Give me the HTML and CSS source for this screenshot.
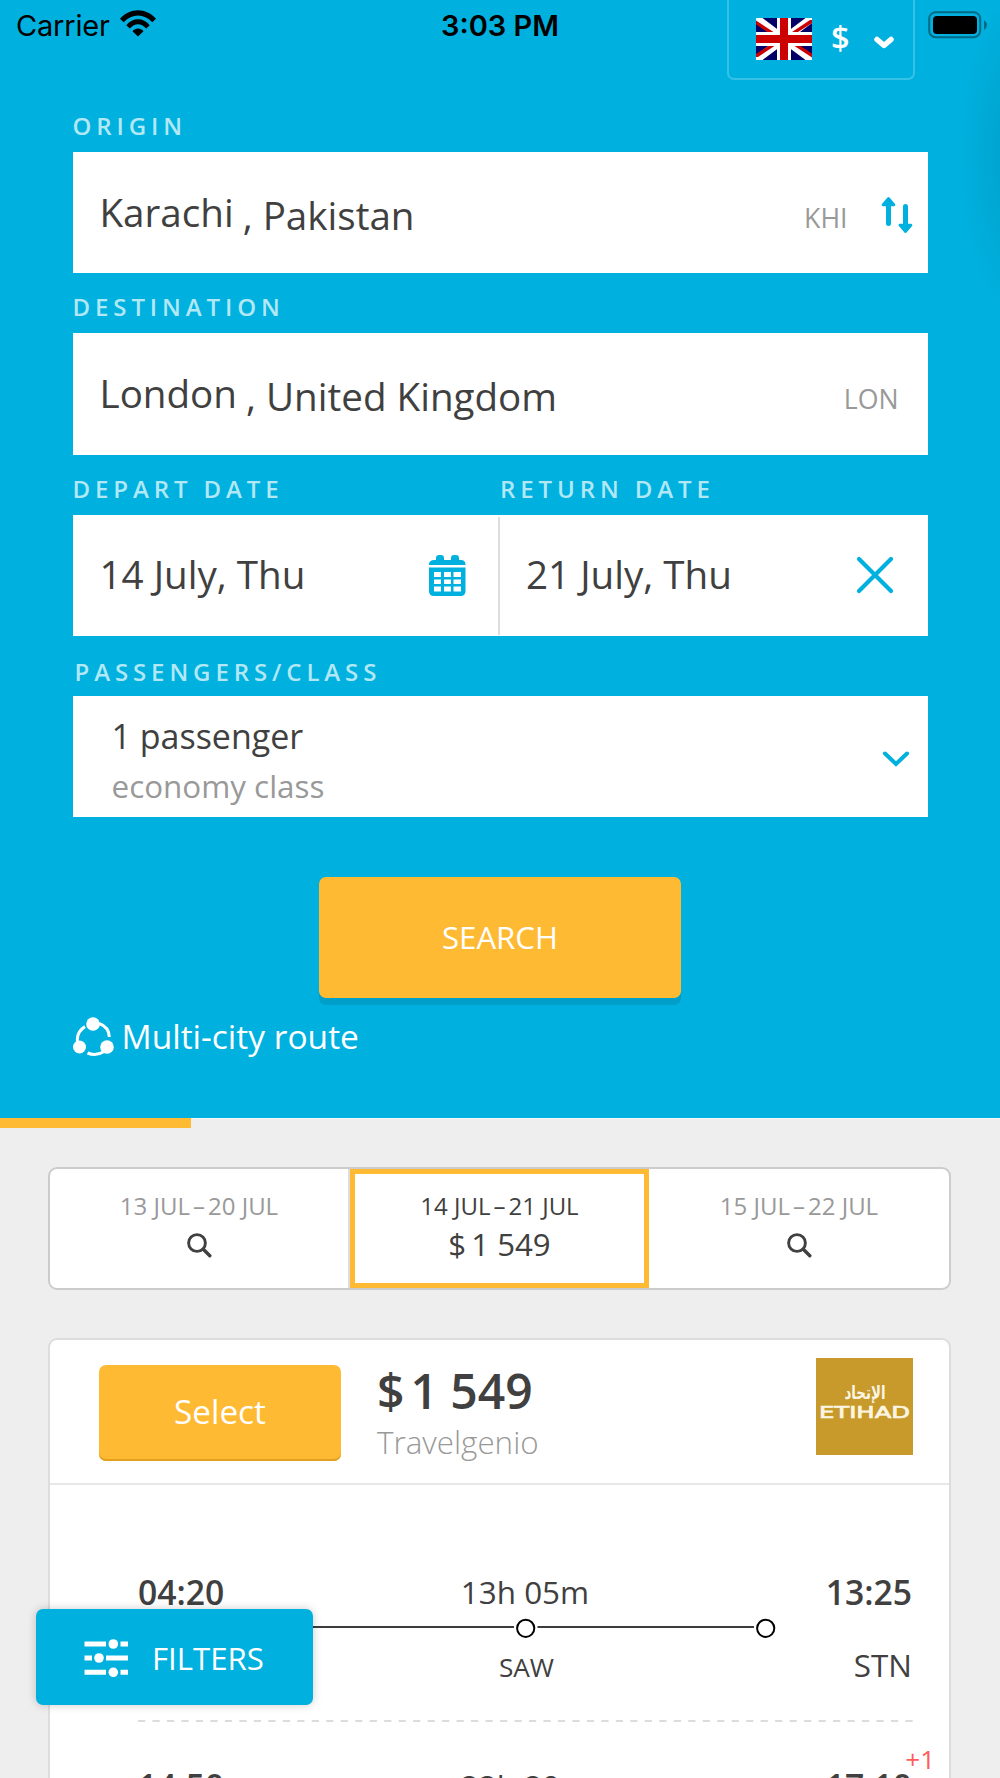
FILE: index.html
```html
<!DOCTYPE html>
<html lang="en">
<head>
<meta charset="utf-8">
<title>Flight search</title>
<link rel="stylesheet" href="styles.css">
</head>
<body>
<div class="screen">
  <header class="hero">
    <div class="status">
      <span class="carrier">Carrier</span>
      <svg class="wifi" width="38" height="29" viewBox="0 0 38 29"><path d="M1 9.800C11-1.600 27-1.600 37 9.800L33.300 13.200C25 4.400 13 4.400 4.700 13.200ZM7.300 16.200C13.800 8.400 24.200 8.400 30.700 16.200L27.200 19.500C22 13.800 16 13.800 10.800 19.500ZM13.500 22.300C16.400 18.600 21.600 18.600 24.500 22.300L19 27.500Z" fill="#000"/></svg>
      <span class="time">3:03 PM</span>
      <div class="locale">
        <svg class="flag" width="56" height="42" viewBox="0 0 56 42"><path d="M0 2q0-2 2-2h52q2 0 2 2v38q0 2-2 2H2q-2 0-2-2z" fill="#006"/><path d="M0 3L52 42H56V39L4 0H0ZM56 3L4 42H0V39L52 0H56Z" fill="#fff" stroke="#fff" stroke-width="3"/><path d="M0 2.500L19 15H13L0 6.500ZM56 39.500L37 27H43L56 35.500ZM56 2V5L42 14H36L54 2ZM0 39V36L14 27H20L2 39Z" fill="#c00"/><path d="M21 0h14v42H21zM0 14h56v14H0z" fill="#fff"/><path d="M24 0h8v42h-8zM0 17h56v8H0z" fill="#c00"/></svg>
        <span class="currency">$</span>
        <svg class="caret" width="20" height="13" viewBox="0 0 20 13"><path d="M3 3.500L10 9.500L17 3.500" fill="none" stroke="#fff" stroke-width="5.500" stroke-linecap="round" stroke-linejoin="round"/></svg>
      </div>
      <svg class="battery" width="60" height="28" viewBox="0 0 60 28"><rect x="1.200" y="1.200" width="51" height="25" rx="6.500" fill="none" stroke="#006a85" stroke-width="2"/><rect x="5" y="5" width="44" height="18" rx="4" fill="#000"/><path d="M56 9q6 5 0 10z" fill="#006a85"/></svg>
    </div>

    <form class="search">
      <label class="label">ORIGIN</label>
      <div class="field">
        <span class="city">Karachi</span><span class="country">, Pakistan</span>
        <span class="code">KHI</span>
        <svg class="swap" width="32" height="38" viewBox="0 0 32 38"><g fill="#00b1df" stroke="#00b1df" stroke-linecap="round" stroke-linejoin="round"><path d="M7.500 8V27.500M24.500 10.500V29" stroke-width="5"/><path d="M2 8.800L7.500 2.500L13 8.800ZM19 29.200L24.500 35.500L30 29.200Z" stroke-width="2.800"/></g></svg>
      </div>

      <label class="label">DESTINATION</label>
      <div class="field">
        <span class="city">London</span><span class="country">, United Kingdom</span>
        <span class="code last">LON</span>
      </div>

      <div class="labels"><label class="label">DEPART DATE</label><label class="label">RETURN DATE</label></div>
      <div class="dates">
        <div class="field depart">
          <span class="date">14 July, Thu</span>
          <svg class="calendar" width="37" height="42" viewBox="0 0 37 42"><path d="M0 9V8.500Q1 5 5 5H7V3Q7 0 10 0H12Q15 0 15 3V5H22V3Q22 0 25 0H27Q30 0 30 3V5H32Q36 5 36.500 9V10H0ZM0 12.500H36.500V36Q36.500 41 31.500 41H5Q0 41 0 36Z" fill="#00b1df"/><path d="M5 17h7v5H5zM15 17h7v5h-7zM24.500 17h7.500v5h-7.500zM5 24.500h7v4.500H5zM15 24.500h7v4.500h-7zM24.500 24.500h7.500v4.500h-7.500zM5 31.500h7v5H5zM15 31.500h7v5h-7zM24.500 31.500h7.500v5h-7.500z" fill="#fff"/></svg>
        </div>
        <div class="field return">
          <span class="date">21 July, Thu</span>
          <svg class="clear" width="38" height="38" viewBox="0 0 38 38"><path d="M3 3L35 35M35 3L3 35" stroke="#00b1df" stroke-width="4.200" stroke-linecap="round"/></svg>
        </div>
      </div>

      <label class="label inset">PASSENGERS/CLASS</label>
      <div class="field passengers">
        <div class="party"><span class="count">1 passenger</span><span class="cabin">economy class</span></div>
        <svg class="expand" width="28" height="18" viewBox="0 0 28 18"><path d="M3 3.500L14 14L25 3.500" fill="none" stroke="#00b1df" stroke-width="4" stroke-linecap="round"/></svg>
      </div>

      <button class="submit" type="button">SEARCH</button>

      <a class="multi">
        <svg width="42" height="40" viewBox="0 0 42 40"><g fill="none" stroke="#fff" stroke-width="3"><path d="M4.500 25C3.500 18 6.500 13 12 9.600M26 6.500C32 8.500 36 13.500 36.300 20M14.500 36C20 38.300 26 37.800 31 34.500"/></g><g fill="#fff"><circle cx="20" cy="7" r="6.800"/><circle cx="6.500" cy="30" r="6.500"/><circle cx="34" cy="30" r="6.800"/></g></svg>
        <span>Multi-city route</span>
      </a>
    </form>
  </header>

  <div class="progress"><div class="bar"></div></div>

  <main class="results">
    <nav class="days">
      <div class="day"><span class="range">13 JUL<i>–</i>20 JUL</span><svg width="25" height="25" viewBox="0 0 25 25"><path d="M16.300 16.300L22.800 22.800" stroke="#404040" stroke-width="3.400" stroke-linecap="round"/><circle cx="10" cy="10" r="8.400" fill="none" stroke="#404040" stroke-width="2.900"/></svg></div>
      <div class="day active"><span class="range">14 JUL<i>–</i>21 JUL</span><span class="fare">$<b></b>1 549</span></div>
      <div class="day"><span class="range">15 JUL<i>–</i>22 JUL</span><svg width="25" height="25" viewBox="0 0 25 25"><path d="M16.300 16.300L22.800 22.800" stroke="#404040" stroke-width="3.400" stroke-linecap="round"/><circle cx="10" cy="10" r="8.400" fill="none" stroke="#404040" stroke-width="2.900"/></svg></div>
    </nav>

    <article class="ticket">
      <div class="offer">
        <button class="select" type="button">Select</button>
        <div class="price"><span class="amount">$<b></b>1 549</span><span class="agency">Travelgenio</span></div>
        <svg class="airline" width="97" height="97" viewBox="0 0 97 97"><rect width="97" height="97" fill="#c79a2b"/><text x="49" y="41" text-anchor="middle" textLength="41" lengthAdjust="spacingAndGlyphs" class="arabic">الإتحاد</text><text x="3" y="59.500" textLength="91" lengthAdjust="spacingAndGlyphs" class="brand">ETIHAD</text></svg>
      </div>

      <div class="leg">
        <div class="times"><span class="clock">04:20</span><span class="duration">13h 05m</span><span class="clock end">13:25</span></div>
        <svg class="track" width="775" height="22" viewBox="0 0 775 22"><path d="M36 9H376M399.500 9H616" stroke="#3c3c3c" stroke-width="2"/><g fill="#fff" stroke="#000" stroke-width="2"><circle cx="387.700" cy="10.300" r="8.600"/><circle cx="627.700" cy="10.300" r="8.600"/></g></svg>
        <div class="stops"><span></span><span class="stop">SAW</span><span class="airport">STN</span></div>
      </div>
      <svg class="divider" width="775" height="2" viewBox="0 0 775 2"><path d="M0 1H775" stroke="#dcdcdc" stroke-width="2" stroke-dasharray="7.200 7.280"/></svg>
      <div class="leg second">
        <div class="times"><span class="clock">14:50</span><span class="duration">22h 20m</span><span class="clock end">17:10<sup class="plus">+1</sup></span></div>
      </div>
    </article>
  </main>

  <button class="filters" type="button">
    <svg width="44" height="38" viewBox="0 0 44 38"><g stroke="#fff" stroke-width="5"><path d="M.500 5H22M36.500 5H44M.500 19H8M22 19H44M.500 33.300H22M36.500 33.300H44"/></g><g fill="#fff"><circle cx="29.300" cy="5" r="4.800"/><circle cx="15" cy="19" r="4.800"/><circle cx="29.300" cy="33.300" r="4.800"/></g></svg>
    <span>FILTERS</span>
  </button>
</div>
</body>
</html>
```
FILE: styles.css
```css
* { box-sizing: border-box; }
body { margin: 0; background: #eee; }
svg { display: block; flex: none; }
button { border: 0; padding: 0; font: inherit; }
.screen {
  position: relative;
  width: 1000px;
  height: 1778px;
  overflow: hidden;
  font-family: "Open Sans", sans-serif;
  color: #404040;
  white-space: nowrap;
}

/* Search header */
.hero {
  height: 1118px;
  background: radial-gradient(ellipse 58px 170px at 1014px 155px, rgba(0, 0, 0, .09), rgba(0, 0, 0, 0)) #00b1df;
}
.status {
  display: flex;
  align-items: flex-start;
  height: 92px;
  padding-left: 16px;
  font-family: Inter, sans-serif;
  font-size: 29px;
  line-height: 52px;
  color: #000;
}
.carrier { width: 103px; letter-spacing: -.2px; }
.wifi { margin-top: 9px; }
.time { width: 118px; margin-left: 284px; font-weight: 600; }
.locale {
  display: flex;
  width: 188px;
  height: 80px;
  margin-left: 168px;
  border: 2px solid #36c1e6;
  border-top: 0;
  border-radius: 0 0 7px 7px;
}
.flag { margin: 18px 0 0 27px; }
.currency {
  width: 18px;
  margin: 12px 0 0 19px;
  font: 600 32.500px/52px "Open Sans", sans-serif;
  color: #fff;
}
.caret { margin: 36px 0 0 25px; }
.battery { margin: 11px 0 0 13px; }

.search {
  display: flex;
  flex-direction: column;
  width: 855px;
  margin: 0 auto;
}
.label {
  height: 60px;
  padding: 18px 0 0;
  font-size: 24px;
  font-weight: 600;
  line-height: 32px;
  letter-spacing: 4.9px;
  color: #b2e8f5;
}
.inset { padding: 20px 0 0 2px; }
.field {
  display: flex;
  height: 121.330px;
  background: #fff;
  font-size: 38.600px;
}
.city { margin-left: 27px; line-height: 121px; }
.country { margin-left: 9px; line-height: 126px; }
.code { margin-left: auto; font-size: 26.670px; line-height: 131px; color: #999; }
.swap { margin: 44px 15px 0 33px; }
.last { margin-right: 29px; }
.labels, .dates { display: grid; grid-template-columns: 1fr 1fr; }
.date { margin-left: 27px; line-height: 119px; }
.depart { background: linear-gradient(#ddd, #ddd) 425px 2px / 2px 118px no-repeat #fff; }
.return .date { margin-left: 26px; }
.calendar { margin: 40px 34px 0 auto; }
.clear { margin: 41px 34px 0 auto; }
.passengers { align-items: flex-start; }
.party { display: flex; flex-direction: column; margin: 15px 0 0 39px; }
.count { font-size: 34px; line-height: 50px; }
.cabin { font-size: 31.400px; line-height: 49px; color: #999; }
.expand { margin: 54px 18px 0 auto; }
.submit {
  align-self: center;
  width: 362px;
  height: 121px;
  margin-top: 60px;
  padding-bottom: 2px;
  border-radius: 7px;
  background: #ffba33;
  box-shadow: 0 7px 0 #009fc9;
  font-size: 31.200px;
  color: #fff;
}
.multi {
  display: flex;
  gap: 7px;
  margin-top: 19px;
  color: #fff;
  font-size: 33.500px;
  line-height: 39px;
}

.progress { height: 10px; border-top: 1px solid #f4f8f9; }
.bar { width: 191px; height: 10px; margin-top: -1px; background: #ffba33; }

/* Date tabs */
.results { padding: 39px 49px 0 48px; }
.days {
  display: grid;
  grid-template-columns: 300px 299px 300px;
  height: 123px;
  border: 2px solid #ccc;
  border-radius: 9px;
  background: #fff;
}
.day {
  display: flex;
  flex-direction: column;
  align-items: center;
  padding-top: 19px;
}
.day:first-child { border-right: 2px solid #ddd; }
.active { padding-top: 14px; border: 5px solid #ffba33; }
.range { font-size: 24px; line-height: 36px; color: #999; }
.range i { margin: 0 3px; font-style: normal; }
.day svg { margin-top: 9px; }
.active .range, .fare { color: #404040; }
.fare { font-size: 31.200px; line-height: 41px; }
.fare b, .amount b { display: inline-block; width: 6px; }
.fare b { width: 5px; }

/* Ticket */
.ticket {
  height: 600px;
  margin-top: 48px;
  border: 2px solid #ddd;
  border-radius: 9px;
  background: #fff;
}
.offer {
  display: flex;
  height: 145px;
  padding: 25px 36px 0 49px;
  border-bottom: 2px solid #e8e8e8;
}
.select {
  width: 242px;
  height: 96px;
  padding-bottom: 5px;
  border-radius: 7px;
  background: #ffba33;
  box-shadow: inset 0 -2px #e39f20;
  font-size: 33.300px;
  color: #fff;
}
.price { display: flex; flex-direction: column; margin: -5px auto 0 36px; }
.amount { font-size: 48px; font-weight: 600; line-height: 62px; }
.agency { font-size: 31.400px; font-weight: 300; line-height: 40px; color: #999; }
.airline { margin-top: -7px; }
.arabic { font: 700 19px "DejaVu Sans", sans-serif; fill: #fcf5e2; }
.brand { font: 400 16px "DejaVu Sans", sans-serif; fill: #fcf5e2; stroke: #fcf5e2; stroke-width: .7px; }
.leg { padding: 86px 37px 0 88px; }
.times, .stops {
  display: grid;
  grid-template-columns: 1fr 2fr 1fr;
  font-size: 31.400px;
  line-height: 44px;
}
.times { line-height: 42px; }
.clock { font-size: 33.700px; font-weight: 600; }
.duration, .stop { text-align: center; }
.end, .airport { text-align: right; }
.track { margin-top: 5px; }
.stops { margin-top: 3px; }
.stop { padding-left: 3px; font-size: 26.200px; line-height: 48px; }
.divider { margin: 29px 0 0 88px; }
.second { padding-top: 42.500px; }
.end { position: relative; }
.plus {
  position: absolute;
  top: -24px;
  right: -23px;
  font-size: 26px;
  font-weight: 400;
  line-height: 36px;
  color: #ff5c5c;
}

.filters {
  position: absolute;
  left: 36px;
  top: 1609px;
  display: flex;
  align-items: center;
  gap: 24px;
  width: 277px;
  height: 96px;
  padding: 1px 0 0 48px;
  border-radius: 7px;
  background: #00b1df;
  box-shadow: 0 0 10px rgba(0, 0, 0, .2);
  font-size: 31.200px;
  color: #fff;
}
```
